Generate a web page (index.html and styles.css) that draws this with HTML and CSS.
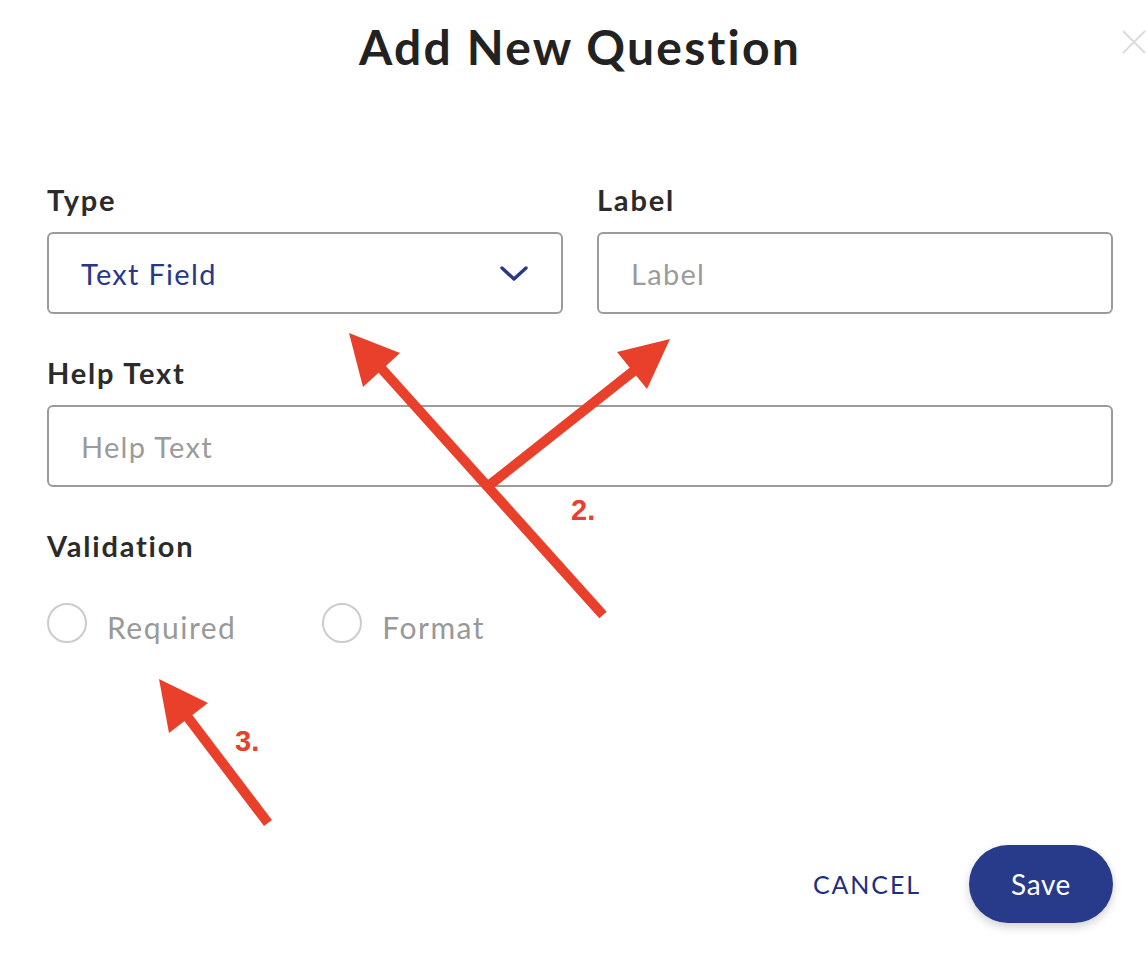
FILE: index.html
```html
<!DOCTYPE html>
<html>
<head>
<meta charset="utf-8">
<link rel="stylesheet" href="styles.css">
</head>
<body>
<div class="modal">
  <header class="modal-head">
    <h1 class="title">Add New Question</h1>
    <button class="close" aria-label="Close">
      <svg width="24" height="24" viewBox="0 0 24 24"><path d="M1 1L23 23M23 1L1 23" stroke="#dcdcdc" stroke-width="2" fill="none"/></svg>
    </button>
  </header>

  <div class="row two">
    <div class="field">
      <label class="lbl">Type</label>
      <div class="box select">
        <span class="value">Text Field</span>
        <svg class="chev" width="28" height="18" viewBox="0 0 28 18"><path d="M2 3L14 14L26 3" stroke="#27378a" stroke-width="3.4" fill="none" stroke-linecap="round" stroke-linejoin="round"/></svg>
      </div>
    </div>
    <div class="field">
      <label class="lbl">Label</label>
      <div class="box"><span class="ph">Label</span></div>
    </div>
  </div>

  <div class="field">
    <label class="lbl">Help Text</label>
    <div class="box"><span class="ph">Help Text</span></div>
  </div>

  <div class="field">
    <label class="lbl">Validation</label>
    <div class="radios">
      <div class="radio"><span class="circle"></span><span class="rtext">Required</span></div>
      <div class="radio"><span class="circle"></span><span class="rtext">Format</span></div>
    </div>
  </div>

  <footer class="actions">
    <button class="cancel">CANCEL</button>
    <button class="save">Save</button>
  </footer>
</div>

<svg class="annot" width="1148" height="956" viewBox="0 0 1148 956">
  <g stroke="#e8402a" stroke-width="10" fill="none" stroke-linecap="butt">
    <line x1="603" y1="615" x2="372" y2="358"/>
    <line x1="487" y1="487" x2="645" y2="362"/>
    <line x1="268" y1="823" x2="180" y2="707"/>
  </g>
  <g fill="#e8402a">
    <polygon points="349,333 400,353 363,387"/>
    <polygon points="670,339 617,352 647,389"/>
    <polygon points="159,679 208,703 169,733"/>
  </g>
  <text x="571" y="520" class="num">2.</text>
  <text x="235" y="751" class="num">3.</text>
</svg>
</body>
</html>
```

FILE: styles.css
```css
html, body {
  margin: 0;
  padding: 0;
  background: #ffffff;
}
body {
  width: 1148px;
  height: 956px;
  position: relative;
  overflow: hidden;
  font-family: "Lato", "Open Sans", sans-serif;
}
.modal {
  padding: 0 35px 0 47px;
  display: flex;
  flex-direction: column;
}
.modal-head {
  height: 98px;
  display: flex;
  align-items: center;
  justify-content: center;
  position: relative;
  margin-bottom: 86px;
}
.title {
  margin: -4px 0 0 0;
  font-size: 48px;
  font-weight: 700;
  color: #222222;
  letter-spacing: 2.2px;
  line-height: 1;
}
.close {
  position: absolute;
  right: -33px;
  top: 30px;
  background: none;
  border: 0;
  padding: 0;
}
.row.two {
  display: grid;
  grid-template-columns: 1fr 1fr;
  column-gap: 34px;
  margin-bottom: 43px;
}
.field {
  display: flex;
  flex-direction: column;
  margin-bottom: 43px;
}
.row.two .field { margin-bottom: 0; }
.lbl {
  font-size: 29px;
  font-weight: 700;
  color: #2b2b2b;
  line-height: 32px;
  letter-spacing: 1.8px;
  margin-bottom: 16px;
}
.box {
  height: 82px;
  box-sizing: border-box;
  border: 2px solid #9b9b9b;
  border-radius: 6px;
  display: flex;
  align-items: center;
  padding: 0 32px;
  font-size: 29px;
  letter-spacing: 1.3px;
}
.select {
  justify-content: space-between;
  padding-right: 33px;
}
.value { color: #27378a; }
.ph { color: #9b9b9b; }
.chev { margin-top: 2px; }
.radios {
  display: flex;
  gap: 86px;
  margin-top: 23px;
}
.radio {
  display: flex;
  align-items: center;
  gap: 20px;
}
.circle {
  width: 40px;
  height: 40px;
  box-sizing: border-box;
  border: 2px solid #cccccc;
  border-radius: 50%;
}
.rtext {
  font-size: 30px;
  color: #999999;
  letter-spacing: 1.5px;
  margin-top: 8px;
}
.actions {
  display: flex;
  justify-content: flex-end;
  align-items: center;
  gap: 50px;
  margin-top: 157px;
}
.cancel {
  background: none;
  border: 0;
  padding: 0;
  font-family: inherit;
  font-size: 25px;
  color: #1e2f7d;
  letter-spacing: 1.9px;
  margin-right: -2px;
}
.save {
  width: 144px;
  height: 78px;
  border: 0;
  border-radius: 39px;
  background: #283a8a;
  color: #ffffff;
  font-family: inherit;
  font-size: 28px;
  letter-spacing: 0.6px;
  box-shadow: 0 4px 10px rgba(0,0,0,0.18);
}
.annot {
  position: absolute;
  left: 0;
  top: 0;
  pointer-events: none;
}
.num {
  font-family: "Liberation Sans", Arial, sans-serif;
  font-weight: 700;
  font-size: 29px;
  fill: #e8402a;
}
```
